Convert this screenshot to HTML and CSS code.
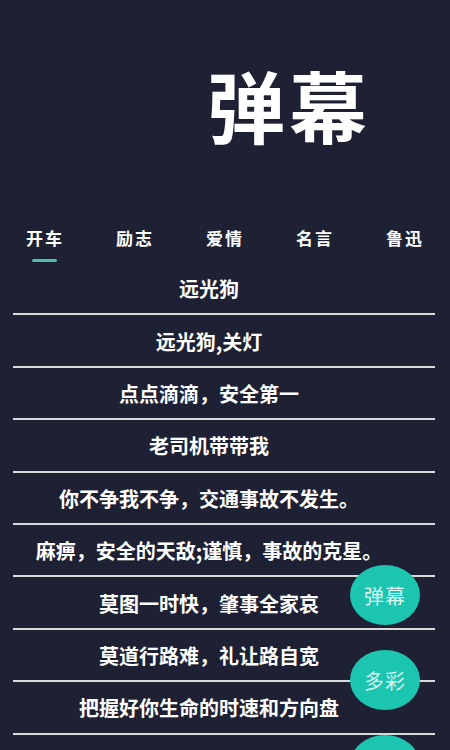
FILE: index.html
```html
<!DOCTYPE html>
<html lang="zh-CN">
<head>
<meta charset="utf-8">
<title>弹幕</title>
<link rel="stylesheet" href="styles.css">
</head>
<body>
<div class="app">
  <header class="header">
    <h1 class="title">弹幕</h1>
  </header>
  <nav class="tabs">
    <div class="tab active"><span class="label">开车</span><span class="indicator"></span></div>
    <div class="tab"><span class="label">励志</span></div>
    <div class="tab"><span class="label">爱情</span></div>
    <div class="tab"><span class="label">名言</span></div>
    <div class="tab"><span class="label">鲁迅</span></div>
  </nav>
  <ul class="list">
    <li class="row">远光狗</li>
    <li class="row">远光狗,关灯</li>
    <li class="row">点点滴滴，安全第一</li>
    <li class="row">老司机带带我</li>
    <li class="row">你不争我不争，交通事故不发生。</li>
    <li class="row">麻痹，安全的天敌;谨慎，事故的克星。</li>
    <li class="row">莫图一时快，肇事全家哀</li>
    <li class="row">莫道行路难，礼让路自宽</li>
    <li class="row">把握好你生命的时速和方向盘</li>
    <li class="row">宁停三分钟，不抢一秒保平安</li>
  </ul>
  <div class="fab fab-1">弹幕</div>
  <div class="fab fab-2">多彩</div>
  <div class="fab fab-3"></div>
</div>
</body>
</html>
```

FILE: styles.css
```css
* { box-sizing: border-box; }
html, body {
  margin: 0;
  padding: 0;
  background: #1d2133;
}
.app {
  position: relative;
  width: 450px;
  height: 750px;
  overflow: hidden;
  background: #1d2133;
  color: #ffffff;
  font-family: "Noto Sans CJK SC", "Noto Sans", sans-serif;
}
.header {
  height: 200px;
  padding-top: 60px;
  padding-left: 207px;
}
.title {
  margin: 0;
  font-size: 78px;
  line-height: 88px;
  font-weight: 700;
  letter-spacing: 4px;
  color: #ffffff;
}
.tabs {
  display: flex;
  height: 63px;
  padding-top: 27px;
  margin-left: -1px;
  border-bottom: 1px solid #1a1e2e;
}
.tab {
  width: 90px;
  display: flex;
  flex-direction: column;
  align-items: center;
}
.label {
  font-size: 17px;
  line-height: 22px;
  font-weight: 700;
  letter-spacing: 2px;
  padding-left: 2px;
}
.indicator {
  margin-top: 10px;
  width: 25px;
  height: 4px;
  border-radius: 2px;
  background: #4cbfb0;
}
.list {
  list-style: none;
  margin: 0;
  padding: 0 15px 0 13px;
}
.row {
  height: 52.4px;
  padding-top: 1px;
  padding-right: 30px;
  display: flex;
  align-items: center;
  justify-content: center;
  font-size: 20px;
  font-weight: 700;
  border-bottom: 2px solid #d9d9dc;
  white-space: nowrap;
}
.fab {
  position: absolute;
  right: 30px;
  width: 70px;
  height: 60px;
  border-radius: 50%;
  background: #1cc5b0;
  color: #d9f6f1;
  font-size: 20px;
  display: flex;
  align-items: center;
  justify-content: center;
  letter-spacing: 1px;
}
.fab-1 { top: 565px; }
.fab-2 { top: 650px; }
.fab-3 { top: 735px; }
```
